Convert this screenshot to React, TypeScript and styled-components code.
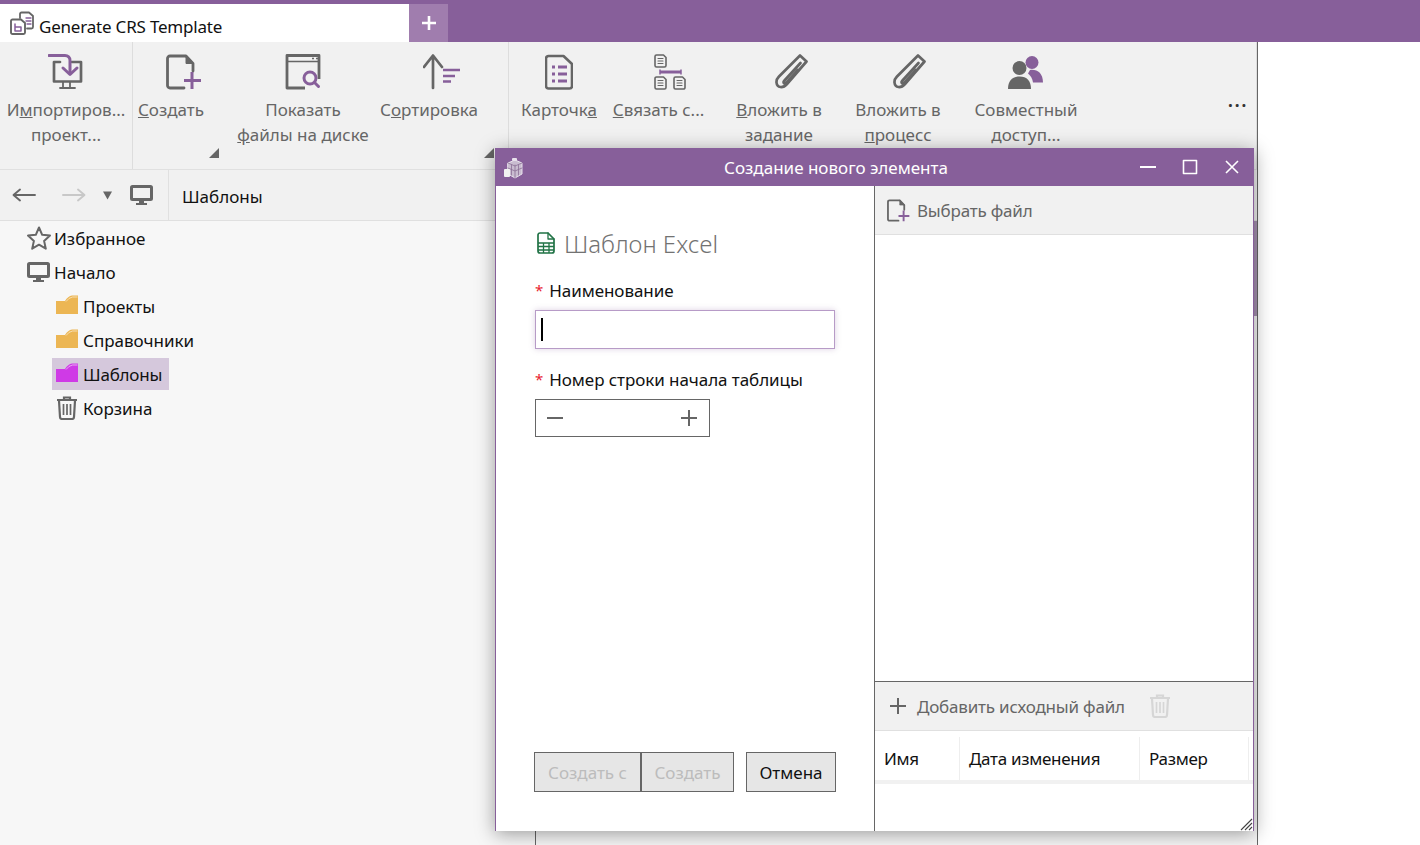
import React from 'react';
import styled, { createGlobalStyle } from 'styled-components';

const PURPLE = '#875f9a';
const GREY = '#666666';

const GlobalStyle = createGlobalStyle`
  html, body {
    margin: 0;
    padding: 0;
    background: #ffffff;
    font-family: "Noto Sans", "Open Sans", sans-serif;
    color: #111111;
  }
  * { box-sizing: border-box; }
`;

// Page frame
const Page = styled.div`
  position: relative;
  width: 1420px;
  height: 845px;
  overflow: hidden;
  display: flex;
  flex-direction: column;
`;

const TopBar = styled.div`
  height: 42px;
  padding-top: 4px;
  display: flex;
  background: ${PURPLE};
`;

const Tab = styled.div`
  width: 409px;
  padding-left: 10px;
  display: flex;
  align-items: center;
  gap: 5px;
  background: #ffffff;
  font-size: 17px;
  letter-spacing: -0.2px;
`;

const TabLabel = styled.span`
  margin-top: 6px;
`;

const AddTab = styled.div`
  width: 39px;
  display: flex;
  align-items: center;
  justify-content: center;
  background: #a07dae;
`;

const Shell = styled.div`
  width: 1258px;
  flex: 1;
  display: flex;
  flex-direction: column;
  border-right: 1px solid ${GREY};
  background: #f7f7f7;
`;

// Ribbon
const Ribbon = styled.div`
  height: 128px;
  display: flex;
  background: #f1f1f1;
  border-bottom: 1px solid #e0e0e0;
`;

const RibbonGroup = styled.div<{ $width?: number; $pad?: number }>`
  position: relative;
  display: flex;
  ${p => (p.$width ? `width: ${p.$width}px;` : 'flex: 1;')}
  padding-left: ${p => p.$pad || 0}px;
  border-right: 1px solid #dddddd;
`;

const RibbonButton = styled.div<{ $width: number; $gap?: number }>`
  width: ${p => p.$width}px;
  margin-left: ${p => p.$gap || 0}px;
  padding-top: 12px;
  flex: none;
  display: flex;
  flex-direction: column;
  align-items: center;
  color: ${GREY};
  font-size: 17px;
  line-height: 25px;
  white-space: nowrap;
  text-align: center;
`;

const IconSlot = styled.div<{ $shift?: number }>`
  height: 36px;
  margin-bottom: 7px;
  margin-left: ${p => (p.$shift || 0) * 2}px;
  display: flex;
  align-items: flex-start;
`;

const Corner = styled.div<{ $right: number }>`
  position: absolute;
  right: ${p => p.$right}px;
  bottom: 11px;
  width: 10px;
  height: 10px;
  background: ${GREY};
  clip-path: polygon(100% 0, 100% 100%, 0 100%);
`;

const More = styled.div`
  position: absolute;
  left: 719px;
  top: 49px;
  color: #333333;
  font-size: 17px;
  letter-spacing: 2px;
  font-weight: 700;
  line-height: 20px;
`;

// Navigation bar
const NavBar = styled.div`
  height: 51px;
  display: flex;
  background: #f1f1f1;
  border-bottom: 1px solid #e0e0e0;
`;

const NavTools = styled.div`
  width: 169px;
  padding-left: 12px;
  display: flex;
  align-items: center;
  border-right: 1px solid #e0e0e0;
`;

const NavSlot = styled.span<{ $gap: number }>`
  margin-left: ${p => p.$gap}px;
  display: flex;
`;

const NavTitle = styled.div`
  padding: 2px 0 0 13px;
  display: flex;
  align-items: center;
  font-size: 17px;
`;

// Tree and the pane behind the dialog
const Content = styled.div`
  flex: 1;
  display: flex;
`;

const TreePane = styled.div`
  width: 536px;
  border-right: 1px solid ${GREY};
`;

const TreeRow = styled.div<{ $level: number }>`
  height: 34px;
  margin-left: ${p => (p.$level ? 52 : 27)}px;
  display: flex;
  align-items: center;
`;

const TreeItem = styled.div<{ $gap?: number }>`
  height: 32px;
  display: flex;
  align-items: center;
  gap: ${p => p.$gap || 3}px;
  font-size: 17px;
`;

const ChildItem = styled(TreeItem)<{ $selected?: boolean }>`
  padding: 0 7px 0 4px;
  gap: 5px;
  background: ${p => (p.$selected ? '#d5c8dc' : 'transparent')};
  letter-spacing: ${p => (p.$selected ? '-0.2px' : '0')};
`;

const RightPane = styled.div`
  flex: 1;
  display: flex;
  justify-content: flex-end;
`;

const ScrollThumb = styled.div`
  width: 3px;
  height: 95px;
  background: #a893b3;
`;

// Dialog
const Dialog = styled.div`
  position: absolute;
  left: 495px;
  top: 148px;
  width: 759px;
  height: 683px;
  display: flex;
  flex-direction: column;
  background: #ffffff;
  border: 1px solid ${PURPLE};
  border-width: 0 1px;
  box-shadow: 0 3px 18px rgba(0, 0, 0, 0.38);
`;

const DialogTitle = styled.div`
  position: relative;
  height: 38px;
  flex: none;
  display: flex;
  align-items: center;
  justify-content: center;
  padding-right: 77px;
  margin: 0 -1px;
  background: ${PURPLE};
  color: #ffffff;
  font-size: 17px;
`;

const TitleIcon = styled.div`
  position: absolute;
  left: 8px;
  top: 9px;
`;

const WindowControls = styled.div`
  position: absolute;
  right: 14px;
  top: 11px;
  display: flex;
  gap: 26px;
`;

const DialogBody = styled.div`
  flex: 1;
  min-height: 0;
  display: flex;
`;

const FormPane = styled.div`
  width: 378px;
  padding: 40px 38px 39px 39px;
  flex: none;
  display: flex;
  flex-direction: column;
`;

const Heading = styled.div`
  height: 34px;
  display: flex;
  align-items: center;
  gap: 9px;
  padding-left: 2px;
  color: #727272;
  font-size: 24px;
  font-weight: 300;
`;

const Label = styled.div<{ $top: number }>`
  height: 26px;
  margin-top: ${p => p.$top}px;
  display: flex;
  align-items: center;
  gap: 6px;
  font-size: 17px;
  letter-spacing: -0.06px;
`;

const Star = styled.span`
  color: #e8232f;
  font-size: 15px;
`;

const InputBox = styled.div`
  width: 300px;
  height: 39px;
  margin-top: 7px;
  padding-left: 5px;
  display: flex;
  align-items: center;
  border: 1px solid #b79bc7;
  box-shadow: 0 0 6px rgba(135, 95, 154, 0.3);
`;

const Caret = styled.div`
  width: 2px;
  height: 23px;
  background: #000000;
`;

const Stepper = styled.div`
  width: 175px;
  height: 38px;
  margin-top: 7px;
  padding: 0 12px 0 11px;
  display: flex;
  align-items: center;
  justify-content: space-between;
  border: 1px solid ${GREY};
`;

const Footer = styled.div`
  margin-top: auto;
  margin-left: -1px;
  display: flex;
`;

const ActionButton = styled.div<{ $width: number; $disabled?: boolean; $gap?: number }>`
  width: ${p => p.$width}px;
  height: 40px;
  margin-left: ${p => p.$gap || 0}px;
  display: flex;
  align-items: center;
  justify-content: center;
  background: #e6e6e6;
  border: 1px solid ${GREY};
  color: ${p => (p.$disabled ? '#bcbcbc' : '#111111')};
  font-size: 17px;
`;

const FilesPane = styled.div`
  position: relative;
  flex: 1;
  display: flex;
  flex-direction: column;
  border-left: 1px solid ${GREY};
`;

const PaneToolbar = styled.div<{ $height: number; $pad: number; $gap: number }>`
  height: ${p => p.$height}px;
  padding-left: ${p => p.$pad}px;
  flex: none;
  display: flex;
  align-items: center;
  gap: ${p => p.$gap}px;
  background: #f1f1f1;
  border-bottom: 1px solid #e0e0e0;
  color: ${GREY};
  font-size: 17px;
  letter-spacing: -0.2px;
`;

const ToolLabel = styled.span`
  margin-right: 13px;
`;

const FilesEmpty = styled.div`
  flex: 1;
  border-bottom: 1px solid ${GREY};
`;

const TableHead = styled.div`
  height: 53px;
  flex: none;
  display: flex;
  border-bottom: 4px solid #f1f1f1;
`;

const HeadCell = styled.div<{ $width: number }>`
  width: ${p => p.$width}px;
  padding-left: 9px;
  margin-top: 6px;
  display: flex;
  align-items: center;
  border-right: 1px solid #eeeeee;
  font-size: 17px;
  letter-spacing: -0.3px;
`;

const TableRest = styled.div`
  height: 47px;
  flex: none;
`;

const Grip = styled.svg`
  position: absolute;
  right: 0;
  bottom: 0;
`;

// Icons
const Icon: React.FC<{ w: number; h: number; children?: React.ReactNode }> = ({ w, h, children }) => (
  <svg width={w} height={h} viewBox={`0 0 ${w} ${h}`} fill="none" strokeLinecap="round" strokeLinejoin="round">
    {children}
  </svg>
);

const TabIcon = () => (
  <Icon w={24} h={24}>
    <path d="M10 7V3a1.5 1.5 0 0 1 1.5-1.5H19L23 5v11a1.5 1.5 0 0 1-1.5 1.5H17" stroke={GREY} strokeWidth="1.8" />
    <path d="M16 7h5M16 10h5M17 13h4" stroke={PURPLE} strokeWidth="1.3" />
    <path d="M1 10a1.5 1.5 0 0 1 1.5-1.5H11L15 12v9.5a1.5 1.5 0 0 1-1.5 1.5h-11A1.5 1.5 0 0 1 1 21.5z" fill="#fff" stroke={GREY} strokeWidth="1.9" />
    <path d="M5 13v7h6v-4H5" stroke={PURPLE} strokeWidth="1.5" />
  </Icon>
);

const ImportIcon = () => (
  <Icon w={36} h={36}>
    <path d="M24 8h9v19.500H6V8h6" stroke={GREY} strokeWidth="2.700" />
    <path d="M15 28v5M22 28v5M12 34h15" stroke={GREY} strokeWidth="1.800" />
    <path d="M1 1.500h16c3 0 5 2 5 5V19" stroke={PURPLE} strokeWidth="3" />
    <path d="M15 14l7 6.500 7-6.500" stroke={PURPLE} strokeWidth="3" />
  </Icon>
);

const NewFileIcon: React.FC<{ size?: number }> = ({ size = 36 }) => (
  <svg width={size} height={size} viewBox="0 0 36 36" fill="none" strokeLinejoin="round" strokeLinecap="round">
    <path d="M18 34H4a2.500 2.500 0 0 1-2.500-2.500v-27A2.500 2.500 0 0 1 4 2h16l7 7.500V17" stroke={GREY} strokeWidth="2.800" />
    <path d="M20 2v7.500h7z" fill={GREY} stroke={GREY} strokeWidth="1" />
    <path d="M26 18v17M18 26.500h17" stroke={PURPLE} strokeWidth="3" strokeLinecap="butt" />
  </svg>
);

const ShowFilesIcon = () => (
  <Icon w={36} h={36}>
    <path d="M20 34H2V1.500h32V25" stroke={GREY} strokeWidth="2.800" strokeLinecap="butt" />
    <path d="M2 7.500h32" stroke={GREY} strokeWidth="1.300" />
    <path d="M27 4.500h2M31 4.500h2" stroke={GREY} strokeWidth="1.500" strokeLinecap="butt" />
    <circle cx="25" cy="24" r="6" stroke={PURPLE} strokeWidth="3" />
    <path d="M29.500 28.500l4 4" stroke={PURPLE} strokeWidth="3" />
  </Icon>
);

const SortIcon = () => (
  <Icon w={38} h={36}>
    <path d="M10 2v32M1 13l9-11.500L19 13" stroke={GREY} strokeWidth="2.700" />
    <path d="M20 16h17M20 22h12M20 27.500h8" stroke={PURPLE} strokeWidth="2.700" strokeLinecap="butt" />
  </Icon>
);

const CardIcon = () => (
  <Icon w={28} h={36}>
    <path d="M3.500 2h15L27 10v22a2.500 2.500 0 0 1-2.500 2.500h-21A2.500 2.500 0 0 1 1 32V4.500A2.500 2.500 0 0 1 3.500 2z" stroke={GREY} strokeWidth="2.600" />
    <path d="M7 13h3M13 13h9M7 20h3M13 20h9M7 27h3M13 27h9" stroke={PURPLE} strokeWidth="2.800" strokeLinecap="butt" />
  </Icon>
);

const MiniDoc: React.FC<{ x: number; y: number }> = ({ x, y }) => (
  <g>
    <path d={`M${x + 1.5} ${y}h7l2.500 2.500v8a1.500 1.500 0 0 1-1.500 1.500h-8a1.500 1.500 0 0 1-1.500-1.500v-9A1.500 1.500 0 0 1 ${x + 1.5} ${y}z`} stroke={GREY} strokeWidth="1.600" />
    <path d={`M${x + 3} ${y + 3.5}h5M${x + 3} ${y + 6}h5M${x + 3} ${y + 8.5}h5`} stroke={GREY} strokeWidth="1.100" />
  </g>
);

const LinkIcon = () => (
  <Icon w={32} h={36}>
    <MiniDoc x={1} y={1} />
    <MiniDoc x={1} y={23} />
    <MiniDoc x={20} y={23} />
    <path d="M6 18h21" stroke={PURPLE} strokeWidth="3" strokeLinecap="butt" />
    <path d="M6 15.500v5M27 15.500v5" stroke={PURPLE} strokeWidth="1.500" strokeLinecap="butt" />
  </Icon>
);

const ClipIcon = () => (
  <Icon w={33} h={36}>
    <path d="M25 1.500l6.500 6L12 30c-4 4.500-10 4-10.500-1.500-.2-2.500 1-4.500 2.500-6z" stroke={GREY} strokeWidth="2.700" />
    <path d="M25.500 9L9.500 26.500c-2 2.200-.2 4 1.800 2.300L23 16" stroke={GREY} strokeWidth="2.700" />
  </Icon>
);

const PeopleIcon = () => (
  <Icon w={36} h={36}>
    <circle cx="24" cy="8.500" r="6.500" fill={PURPLE} />
    <path d="M22 16c7-1 13 3 13 12.500H25c-.5-4-2.500-7-5-9z" fill={PURPLE} />
    <circle cx="11.500" cy="14" r="7" fill={GREY} />
    <path d="M0 35c0-8 4-12.500 11.500-12.500S23 27 23 35z" fill={GREY} />
  </Icon>
);

const MonitorIcon = () => (
  <svg width={23} height={20} viewBox="0 0 23 20" fill="none">
    <rect x="1.500" y="1.500" width="20" height="13" rx="1" stroke={GREY} strokeWidth="3" />
    <path d="M9 16h5v2H9zM6 18h11v2H6z" fill={GREY} />
  </svg>
);

const StarIcon = () => (
  <Icon w={24} h={24}>
    <path d="M12 1.500l3.200 7.300 7.800.8-5.900 5.300 1.700 7.800L12 18.700l-6.800 4 1.700-7.800L1 9.600l7.800-.8z" stroke={GREY} strokeWidth="2" />
  </Icon>
);

const FolderSvg = styled.svg`
  margin-bottom: 3px;
`;

const FolderIcon: React.FC<{ color: string }> = ({ color }) => (
  <FolderSvg width="22" height="19" viewBox="0 0 22 19">
    <path d="M0 6h9Q12 1 16 .500H22V19H0z" fill={color} />
    <path d="M10 6.500Q13 2.500 16.500 2H21.500" fill="none" stroke="#ffffff" strokeOpacity=".55" strokeWidth="1" />
  </FolderSvg>
);

const TrashIcon: React.FC<{ color?: string }> = ({ color = GREY }) => (
  <svg width="22" height="24" viewBox="0 0 22 24" fill="none">
    <path d="M1 4h20M8 4V1.500h6V4" stroke={color} strokeWidth="2.200" />
    <path d="M3 4.500l1 16.500a2 2 0 0 0 2 2h10a2 2 0 0 0 2-2l1-16.500" stroke={color} strokeWidth="2.200" />
    <path d="M7.500 8v11M11 8v11M14.500 8v11" stroke={color} strokeWidth="1.700" />
  </svg>
);

const ExcelIcon = () => (
  <Icon w={18} h={22}>
    <path d="M1 19V3a2 2 0 0 1 2-2h8l6 6v12a2 2 0 0 1-2 2H3a2 2 0 0 1-2-2z" stroke="#217346" strokeWidth="1.700" />
    <path d="M11 1v6h6" stroke="#217346" strokeWidth="1.300" />
    <path d="M1 11h16M1 14.500h16M1 18h16M6.500 11v10M12 11v10" stroke="#217346" strokeWidth="1.300" strokeLinecap="butt" />
  </Icon>
);

const CubeIcon = () => (
  <Icon w={20} h={22}>
    <path d="M5 6l7-3 7 3v11l-7 4-7-4z" fill="#c9bcd0" stroke="#e8e2ec" strokeWidth="1" />
    <path d="M12 8v13M5 6l7 3 7-3M5 11l7 3 7-3M8.500 8v10M15.500 8v10" stroke="#8b7096" strokeWidth=".8" />
    <rect x="1" y="12" width="6" height="8" rx="1" fill="#f1f1f1" />
    <rect x="9" y="1" width="5" height="3" rx="1" fill="#e8e2ec" />
  </Icon>
);

const Line = styled.div``;

const App: React.FC = () => (
  <Page>
    <GlobalStyle />
    <TopBar>
      <Tab>
        <TabIcon />
        <TabLabel>Generate CRS Template</TabLabel>
      </Tab>
      <AddTab>
        <Icon w={16} h={16}>
          <path d="M8 1v14M1 8h14" stroke="#fff" strokeWidth="2.600" strokeLinecap="butt" />
        </Icon>
      </AddTab>
    </TopBar>

    <Shell>
      <Ribbon>
        <RibbonGroup $width={133}>
          <RibbonButton $width={132}>
            <IconSlot><ImportIcon /></IconSlot>
            <Line>И<u>м</u>портиров...</Line>
            <Line>проект...</Line>
          </RibbonButton>
        </RibbonGroup>
        <RibbonGroup $width={376}>
          <RibbonButton $width={76}>
            <IconSlot $shift={12.5}><NewFileIcon /></IconSlot>
            <Line><u>С</u>оздать</Line>
          </RibbonButton>
          <RibbonButton $width={128} $gap={30}>
            <IconSlot><ShowFilesIcon /></IconSlot>
            <Line>Показать</Line>
            <Line><u>ф</u>айлы на диске</Line>
          </RibbonButton>
          <RibbonButton $width={100} $gap={12}>
            <IconSlot $shift={12.5}><SortIcon /></IconSlot>
            <Line>С<u>о</u>ртировка</Line>
          </RibbonButton>
          <Corner $right={289} />
          <Corner $right={14} />
        </RibbonGroup>
        <RibbonGroup $pad={12}>
          <RibbonButton $width={76}>
            <IconSlot><CardIcon /></IconSlot>
            <Line>Карточк<u>а</u></Line>
          </RibbonButton>
          <RibbonButton $width={89} $gap={17}>
            <IconSlot $shift={11}><LinkIcon /></IconSlot>
            <Line><u>С</u>вязать с...</Line>
          </RibbonButton>
          <RibbonButton $width={84} $gap={34}>
            <IconSlot $shift={12}><ClipIcon /></IconSlot>
            <Line><u>В</u>ложить в</Line>
            <Line>задание</Line>
          </RibbonButton>
          <RibbonButton $width={84} $gap={35}>
            <IconSlot $shift={11}><ClipIcon /></IconSlot>
            <Line>Вложить в</Line>
            <Line><u>п</u>роцесс</Line>
          </RibbonButton>
          <RibbonButton $width={102} $gap={35}>
            <IconSlot><PeopleIcon /></IconSlot>
            <Line>Совместный</Line>
            <Line><u>д</u>оступ...</Line>
          </RibbonButton>
          <More>...</More>
        </RibbonGroup>
      </Ribbon>

      <NavBar>
        <NavTools>
          <Icon w={24} h={14}>
            <path d="M23 7H2M8 1.500L1.500 7 8 12.500" stroke={GREY} strokeWidth="1.900" />
          </Icon>
          <NavSlot $gap={26}>
            <Icon w={24} h={14}>
              <path d="M1 7h21M16 1.500L22.500 7 16 12.500" stroke="#c8c8c8" strokeWidth="1.900" />
            </Icon>
          </NavSlot>
          <NavSlot $gap={17}>
            <Icon w={9} h={9}>
              <path d="M0 .500h9L4.500 8.500z" fill={GREY} />
            </Icon>
          </NavSlot>
          <NavSlot $gap={18}>
            <MonitorIcon />
          </NavSlot>
        </NavTools>
        <NavTitle>Шаблоны</NavTitle>
      </NavBar>

      <Content>
        <TreePane>
          <TreeRow $level={0}>
            <TreeItem><StarIcon />Избранное</TreeItem>
          </TreeRow>
          <TreeRow $level={0}>
            <TreeItem $gap={4}><MonitorIcon />Начало</TreeItem>
          </TreeRow>
          <TreeRow $level={1}>
            <ChildItem><FolderIcon color="#ecb654" />Проекты</ChildItem>
          </TreeRow>
          <TreeRow $level={1}>
            <ChildItem><FolderIcon color="#ecb654" />Справочники</ChildItem>
          </TreeRow>
          <TreeRow $level={1}>
            <ChildItem $selected><FolderIcon color="#cf3ae6" />Шаблоны</ChildItem>
          </TreeRow>
          <TreeRow $level={1}>
            <ChildItem><TrashIcon />Корзина</ChildItem>
          </TreeRow>
        </TreePane>
        <RightPane>
          <ScrollThumb />
        </RightPane>
      </Content>
    </Shell>

    <Dialog>
      <DialogTitle>
        <TitleIcon><CubeIcon /></TitleIcon>
        Создание нового элемента
        <WindowControls>
          <Icon w={16} h={16}>
            <path d="M0 8h16" stroke="#fff" strokeWidth="2" strokeLinecap="butt" />
          </Icon>
          <Icon w={16} h={16}>
            <rect x="1.500" y="1.500" width="13" height="13" stroke="#fff" strokeWidth="1.600" />
          </Icon>
          <Icon w={16} h={16}>
            <path d="M2 2l12 12M14 2L2 14" stroke="#fff" strokeWidth="1.600" strokeLinecap="butt" />
          </Icon>
        </WindowControls>
      </DialogTitle>
      <DialogBody>
        <FormPane>
          <Heading><ExcelIcon />Шаблон Excel</Heading>
          <Label $top={17}><Star>*</Star>Наименование</Label>
          <InputBox><Caret /></InputBox>
          <Label $top={17}><Star>*</Star>Номер строки начала таблицы</Label>
          <Stepper>
            <Icon w={16} h={16}>
              <path d="M0 8h16" stroke={GREY} strokeWidth="2" strokeLinecap="butt" />
            </Icon>
            <Icon w={16} h={16}>
              <path d="M0 8h16M8 0v16" stroke={GREY} strokeWidth="2" strokeLinecap="butt" />
            </Icon>
          </Stepper>
          <Footer>
            <ActionButton $width={107} $disabled>Создать с</ActionButton>
            <ActionButton $width={93} $disabled>Создать</ActionButton>
            <ActionButton $width={90} $gap={12}>Отмена</ActionButton>
          </Footer>
        </FormPane>
        <FilesPane>
          <PaneToolbar $height={49} $pad={12} $gap={7}>
            <NewFileIcon size={23} />
            Выбрать файл
          </PaneToolbar>
          <FilesEmpty />
          <PaneToolbar $height={49} $pad={15} $gap={11}>
            <Icon w={16} h={16}>
              <path d="M0 8h16M8 0v16" stroke={GREY} strokeWidth="2" strokeLinecap="butt" />
            </Icon>
            <ToolLabel>Добавить исходный файл</ToolLabel>
            <TrashIcon color="#d6d6d6" />
          </PaneToolbar>
          <TableHead>
            <HeadCell $width={85}>Имя</HeadCell>
            <HeadCell $width={180}>Дата изменения</HeadCell>
            <HeadCell $width={109}>Размер</HeadCell>
          </TableHead>
          <TableRest />
          <Grip width="13" height="13" viewBox="0 0 13 13">
            <path d="M1 12L12 1M5 12l7-7M9 12l3-3" stroke="#444444" strokeWidth="1.100" />
          </Grip>
        </FilesPane>
      </DialogBody>
    </Dialog>
  </Page>
);

export default App;
